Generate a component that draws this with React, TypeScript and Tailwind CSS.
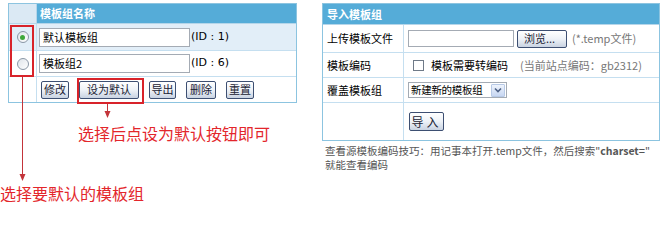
import React from "react";

const cjk = { fontFamily: '"Noto Sans CJK SC", "Liberation Sans", sans-serif' };

function Btn({ children, className = "" }: { children: React.ReactNode; className?: string }) {
  return (
    <span
      className={
        "inline-flex h-[18px] items-center justify-center rounded-[2px] border border-[#3d4f72] bg-gradient-to-b from-[#ffffff] via-[#eef2f7] to-[#c9d3e2] text-[11px] leading-none text-[#1a2233] " +
        className
      }
    >
      {children}
    </span>
  );
}

function Radio({ checked }: { checked?: boolean }) {
  return (
    <span className="flex h-[12px] w-[12px] items-center justify-center rounded-full border border-[#8a97a6] bg-gradient-to-br from-[#dfe4ea] to-[#ffffff]">
      {checked && <span className="h-[5px] w-[5px] rounded-full bg-[#3fa83a]" />}
    </span>
  );
}

export default function App() {
  return (
    <div className="relative h-[206px] w-[662px] overflow-hidden bg-white text-[11px] text-black" style={cjk}>
      <div className="flex items-start gap-[25px] pl-[8px] pt-[3px]">
        {/* Left table */}
        <div className="flex w-[289px] flex-col border border-[#8cc4e0]">
          <div className="flex h-[20px] border-b border-[#b5d6ea]">
            <div className="w-[28px] border-r border-[#b5d6ea] bg-[#dbe9f4]" />
            <div className="flex flex-1 items-center bg-[#55acd8] pl-[3px] font-bold text-white">模板组名称</div>
          </div>
          <div className="flex h-[27px] border-b border-[#c5dff0] bg-[#e2eef8]">
            <div className="flex w-[28px] items-center justify-center border-r border-[#c5dff0]">
              <Radio checked />
            </div>
            <div className="flex flex-1 items-center pl-[2px]">
              <span className="flex h-[19px] w-[151px] items-center border border-[#a4abb4] bg-white pl-[3px]">默认模板组</span>
              <span className="ml-[1px]" style={{ fontFamily: '"DejaVu Sans", sans-serif' }}>(ID : 1)</span>
            </div>
          </div>
          <div className="flex h-[26px] border-b border-[#c5dff0] bg-white">
            <div className="flex w-[28px] items-center justify-center border-r border-[#c5dff0]">
              <Radio />
            </div>
            <div className="flex flex-1 items-center pl-[2px]">
              <span className="flex h-[19px] w-[151px] items-center border border-[#a4abb4] bg-white pl-[3px]">模板组2</span>
              <span className="ml-[1px]" style={{ fontFamily: '"DejaVu Sans", sans-serif' }}>(ID : 6)</span>
            </div>
          </div>
          <div className="flex h-[25px] bg-white">
            <div className="w-[28px] border-r border-[#c5dff0]" />
            <div className="flex flex-1 items-center gap-[10px] pl-[4px]">
              <Btn className="w-[28px]">修改</Btn>
              <Btn className="w-[60px]">设为默认</Btn>
              <Btn className="w-[27px]">导出</Btn>
              <Btn className="w-[30px]">删除</Btn>
              <Btn className="w-[28px]">重置</Btn>
            </div>
          </div>
        </div>

        {/* Right table */}
        <div className="flex w-[338px] flex-col">
          <div className="flex flex-col border border-[#8cc4e0]">
            <div className="flex h-[21px] items-center border-b border-[#b5d6ea] bg-[#55acd8] pl-[4px] font-bold text-white">
              导入模板组
            </div>
            <div className="flex h-[28px] border-b border-[#c5dff0]">
              <div className="flex w-[81px] items-center border-r border-[#c5dff0] pl-[4px]">上传模板文件</div>
              <div className="flex flex-1 items-center pl-[4px]">
                <span className="h-[17px] w-[106px] border border-[#a4abb4] bg-white" />
                <Btn className="ml-[3px] w-[50px] justify-start pl-[6px]">浏览...</Btn>
                <span className="ml-[5px] text-[#777]">(*.temp文件)</span>
              </div>
            </div>
            <div className="flex h-[25px] border-b border-[#c5dff0]">
              <div className="flex w-[81px] items-center border-r border-[#c5dff0] pl-[4px]">模板编码</div>
              <div className="flex flex-1 items-center pl-[9px]">
                <span className="h-[11px] w-[11px] border border-[#6f7a88] bg-white" />
                <span className="ml-[7px]">模板需要转编码</span>
                <span className="ml-[12px] text-[#777]">(当前站点编码：gb2312)</span>
              </div>
            </div>
            <div className="flex h-[25px] border-b border-[#c5dff0]">
              <div className="flex w-[81px] items-center border-r border-[#c5dff0] pl-[4px]">覆盖模板组</div>
              <div className="flex flex-1 items-center pl-[4px]">
                <span className="flex h-[16px] w-[99px] items-center border border-[#a4abb4] bg-white">
                  <span className="flex-1 whitespace-nowrap pl-[2px] text-[10.5px] leading-none tracking-[-0.3px]">新建新的模板组</span>
                  <span className="mr-[1px] flex h-[13px] w-[14px] shrink-0 items-center justify-center rounded-[1px] border border-[#b7c9e6] bg-gradient-to-b from-[#eef3fc] to-[#c7d7f2]">
                    <svg width="8" height="6" viewBox="0 0 8 6">
                      <path d="M1 1.5 L4 4.5 L7 1.5" fill="none" stroke="#4d6185" strokeWidth="1.6" />
                    </svg>
                  </span>
                </span>
              </div>
            </div>
            <div className="flex h-[37px]">
              <div className="w-[81px] border-r border-[#c5dff0]" />
              <div className="flex flex-1 items-center pl-[5px]">
                <Btn className="h-[19px] w-[35px] text-[12px] tracking-[3px]">导入</Btn>
              </div>
            </div>
          </div>
          <div className="mt-[3px] whitespace-nowrap pl-[3px] text-[10.5px] leading-[14px] text-[#555]">
            查看源模板编码技巧：用记事本打开.temp文件，然后搜索"<b>charset=</b>"
            <br />
            就能查看编码
          </div>
        </div>
      </div>

      {/* Annotations */}
      <div className="absolute left-[10px] top-[25px] h-[52px] w-[24px] border-2 border-[#d8232a]" />
      <div className="absolute left-[77px] top-[78px] h-[26px] w-[67px] border-2 border-[#d8232a]" />
      <svg className="pointer-events-none absolute left-0 top-0" width="662" height="206">
        <line x1="22.5" y1="77" x2="22.5" y2="176" stroke="#c3343a" strokeWidth="1" />
        <path d="M19.5 174 L22.5 181 L25.5 174 Z" fill="#c3343a" />
        <line x1="107.5" y1="104" x2="107.5" y2="113" stroke="#c3343a" strokeWidth="1" />
        <path d="M104.5 111 L107.5 118 L110.5 111 Z" fill="#c3343a" />
      </svg>
      <div className="absolute left-[78px] top-[124px] text-[16px] leading-[18px] text-[#e3262b]">选择后点设为默认按钮即可</div>
      <div className="absolute left-[0px] top-[184px] text-[16px] leading-[18px] text-[#e3262b]">选择要默认的模板组</div>
    </div>
  );
}
